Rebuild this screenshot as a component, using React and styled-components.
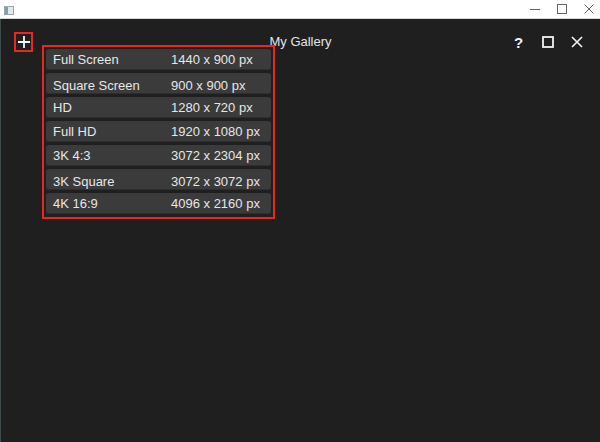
import React from 'react';
import styled, { createGlobalStyle } from 'styled-components';

const Global = createGlobalStyle`
    html, body {
        margin: 0;
        padding: 0;
        background: #1f1f1f;
        font-family: 'Liberation Sans', Arial, sans-serif;
    }
`

const Window = styled.div`
    width: 600px;
    height: 442px;
    display: flex;
    flex-direction: column;
    overflow: hidden;
`

const TitleBar = styled.div`
    height: 18px;
    flex: none;
    background: #ffffff;
    border-bottom: 1px solid #d8d8d8;
    display: flex;
    align-items: center;
    justify-content: space-between;
    padding: 0 6px 0 4px;
`

const AppIcon = styled.div`
    width: 8px;
    height: 7px;
    margin-top: 2px;
    border: 1px solid #9aa7ad;
    background: linear-gradient(90deg, #7fa3ae 0 40%, #e3e9eb 40% 100%);
`

const SysButtons = styled.div`
    display: flex;
    align-items: center;
    gap: 17px;
    color: #555;
`

const Main = styled.div`
    flex: 1;
    background: #1f1f1f;
    border-left: 1px solid #3e4a4c;
    position: relative;
`

const Header = styled.div`
    display: flex;
    align-items: center;
    height: 20px;
    margin-top: 13px;
    padding: 0 14px 0 13px;
`

const AddButton = styled.div`
    width: 15px;
    height: 16px;
    border: 2px solid #e8281f;
    display: flex;
    align-items: center;
    justify-content: center;
`

const Title = styled.div`
    flex: 1;
    text-align: center;
    color: #e4e4e4;
    font-size: 13px;
    padding-left: 56px;
    margin-top: -2px;
`

const Tools = styled.div`
    display: flex;
    align-items: center;
    gap: 17px;
    padding-right: 3px;
`

const Question = styled.span`
    color: #f2f2f2;
    font-size: 15px;
    font-weight: bold;
    width: 13px;
    text-align: center;
`

const Menu = styled.div`
    position: absolute;
    left: 41px;
    top: 26px;
    width: 233px;
    height: 174px;
    box-sizing: border-box;
    border: 2px solid #e8281f;
    display: flex;
    flex-direction: column;
    gap: 3px;
    padding: 2px 2px 0 2px;
`

const Row = styled.div`
    height: 21px;
    flex: none;
    background: #3b3b3b;
    border-radius: 3px;
    box-shadow: inset 0 -1px 0 #2e2e2e;
    display: flex;
    align-items: center;
    color: #e6e6e6;
    font-size: 13px;
    padding: ${p => p.low ? '3px' : '0'} 0 0 7px;
    box-sizing: border-box;
`

const Name = styled.span`
    width: 118px;
`

const sizes = [
    ['Full Screen', '1440 x 900 px', false],
    ['Square Screen', '900 x 900 px', true],
    ['HD', '1280 x 720 px', false],
    ['Full HD', '1920 x 1080 px', false],
    ['3K 4:3', '3072 x 2304 px', false],
    ['3K Square', '3072 x 3072 px', true],
    ['4K 16:9', '4096 x 2160 px', false],
]

export default function App()
{
    return (
        <Window>
            <Global />
            <TitleBar>
                <AppIcon />
                <SysButtons>
                    <svg width="10" height="10" viewBox="0 0 10 10"><path d="M0 5.5h10" stroke="#666" strokeWidth="1" /></svg>
                    <svg width="10" height="10" viewBox="0 0 10 10"><rect x="0.5" y="0.5" width="9" height="9" fill="none" stroke="#666" strokeWidth="1" /></svg>
                    <svg width="10" height="10" viewBox="0 0 10 10"><path d="M0.5 0.5l9 9M9.5 0.5l-9 9" stroke="#666" strokeWidth="1" /></svg>
                </SysButtons>
            </TitleBar>
            <Main>
                <Header>
                    <AddButton>
                        <svg width="12" height="12" viewBox="0 0 12 12"><path d="M6 0v12M0 6h12" stroke="#f4f4f4" strokeWidth="1.8" /></svg>
                    </AddButton>
                    <Title>My Gallery</Title>
                    <Tools>
                        <Question>?</Question>
                        <svg width="12" height="12" viewBox="0 0 12 12"><rect x="1" y="1" width="10" height="10" fill="none" stroke="#f2f2f2" strokeWidth="1.8" /></svg>
                        <svg width="12" height="12" viewBox="0 0 12 12"><path d="M1 1l10 10M11 1L1 11" stroke="#f2f2f2" strokeWidth="1.6" /></svg>
                    </Tools>
                </Header>
                <Menu>
                    {sizes.map(([name, res, low]) => (
                        <Row key={name} low={low}>
                            <Name>{name}</Name>
                            <span>{res}</span>
                        </Row>
                    ))}
                </Menu>
            </Main>
        </Window>
    )
}
